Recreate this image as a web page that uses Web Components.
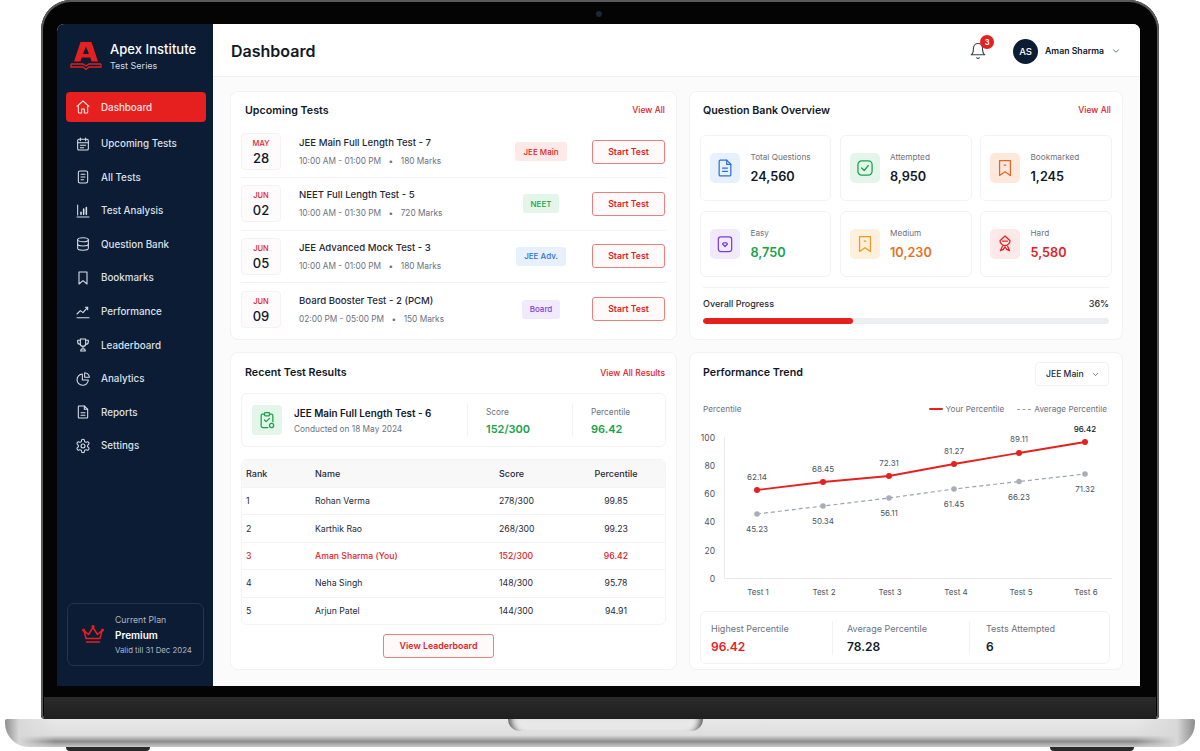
<!DOCTYPE html>
<html lang="en">
<head>
<meta charset="UTF-8">
<title>Apex Institute - Dashboard</title>
<style>
    html, body { margin: 0; height: 751px; overflow: hidden; background: #fff; font-family: Inter, "Liberation Sans", sans-serif; color: #111827; }
</style>
</head>
<body>

<apex-laptop>
    <apex-sidebar>
        <nav-item icon="home" active>Dashboard</nav-item>
        <nav-item icon="calendar">Upcoming Tests</nav-item>
        <nav-item icon="list">All Tests</nav-item>
        <nav-item icon="bars">Test Analysis</nav-item>
        <nav-item icon="database">Question Bank</nav-item>
        <nav-item icon="bookmark">Bookmarks</nav-item>
        <nav-item icon="trend">Performance</nav-item>
        <nav-item icon="trophy">Leaderboard</nav-item>
        <nav-item icon="pie">Analytics</nav-item>
        <nav-item icon="report">Reports</nav-item>
        <nav-item icon="gear">Settings</nav-item>
    </apex-sidebar>
    <top-bar></top-bar>
    <dash-grid>
        <panel-card heading="Upcoming Tests" action="View All">
            <test-row month="MAY" day="28" name="JEE Main Full Length Test - 7" time="10:00 AM - 01:00 PM" marks="180 Marks" tag="JEE Main" tone="red"></test-row>
            <test-row month="JUN" day="02" name="NEET Full Length Test - 5" time="10:00 AM - 01:30 PM" marks="720 Marks" tag="NEET" tone="green"></test-row>
            <test-row month="JUN" day="05" name="JEE Advanced Mock Test - 3" time="10:00 AM - 01:00 PM" marks="180 Marks" tag="JEE Adv." tone="blue"></test-row>
            <test-row month="JUN" day="09" name="Board Booster Test - 2 (PCM)" time="02:00 PM - 05:00 PM" marks="150 Marks" tag="Board" tone="purple"></test-row>
        </panel-card>

        <panel-card heading="Question Bank Overview" action="View All" style="--title-x:13px">
            <tile-grid>
                <stat-tile icon="doc" tone="blue" label="Total Questions" value="24,560"></stat-tile>
                <stat-tile icon="check" tone="green" label="Attempted" value="8,950"></stat-tile>
                <stat-tile icon="mark" tone="orange" label="Bookmarked" value="1,245"></stat-tile>
                <stat-tile icon="easy" tone="purple" label="Easy" value="8,750" colored></stat-tile>
                <stat-tile icon="mark" tone="amber" label="Medium" value="10,230" colored></stat-tile>
                <stat-tile icon="hard" tone="red" label="Hard" value="5,580" colored></stat-tile>
            </tile-grid>
            <overall-progress value="36"></overall-progress>
        </panel-card>

        <panel-card heading="Recent Test Results" action="View All Results" style="--head-top:5px">
            <result-summary></result-summary>
            <rank-table>
                <rank-row head rank="Rank" name="Name" score="Score" pct="Percentile"></rank-row>
                <rank-row rank="1" name="Rohan Verma" score="278/300" pct="99.85"></rank-row>
                <rank-row rank="2" name="Karthik Rao" score="268/300" pct="99.23"></rank-row>
                <rank-row me rank="3" name="Aman Sharma (You)" score="152/300" pct="96.42"></rank-row>
                <rank-row rank="4" name="Neha Singh" score="148/300" pct="95.78"></rank-row>
                <rank-row rank="5" name="Arjun Patel" score="144/300" pct="94.91"></rank-row>
            </rank-table>
            <outline-button>View Leaderboard</outline-button>
        </panel-card>

        <panel-card heading="Performance Trend" style="--title-x:13px;--head-top:5px">
            <select-box slot="action">JEE Main</select-box>
            <trend-chart></trend-chart>
            <stat-strip></stat-strip>
        </panel-card>
    </dash-grid>
</apex-laptop>

<script>
    const ICONS = {
        home: '<path d="M3 11 12 3l9 8"/><path d="M5 9.5V20a1 1 0 0 0 1 1h4v-6h4v6h4a1 1 0 0 0 1-1V9.5"/>',
        calendar: '<rect x="4" y="5" width="16" height="16" rx="2"/><path d="M8 3v4M16 3v4M4 10h16M8 14h8M8 17.5h5"/>',
        list: '<rect x="5" y="3" width="14" height="18" rx="2.5"/><path d="M9 8h6M9 12h6M9 16h4"/>',
        bars: '<path d="M4 3v15M3 21h18"/><path d="M9 17v-3M13 17V9M17 17V7" stroke-width="2.4"/>',
        database: '<ellipse cx="12" cy="5.5" rx="8" ry="3"/><path d="M4 5.5V18.5c0 1.7 3.6 3 8 3s8-1.3 8-3V5.5"/><path d="M4 12c0 1.7 3.6 3 8 3s8-1.3 8-3"/>',
        bookmark: '<path d="M6 3h12v18l-6-5-6 5z"/>',
        trend: '<path d="M3 20.5h18"/><path d="M3 15l5-5 4 3 7-8"/><path d="M15.5 5H19v3.5"/>',
        trophy: '<path d="M8 3h8v7a4 4 0 0 1-8 0z"/><path d="M8 5H4v2a4 4 0 0 0 4 4M16 5h4v2a4 4 0 0 1-4 4M12 14v4M8.5 21h7l-1-3h-5z"/>',
        pie: '<path d="M11 4.5a8.5 8.5 0 1 0 9 9h-9z"/><path d="M14.5 2.5a7 7 0 0 1 7 7h-7z"/>',
        report: '<path d="M6 3h8l5 5v12a1 1 0 0 1-1 1H6a1 1 0 0 1-1-1V4a1 1 0 0 1 1-1z"/><path d="M14 3v5h5M9 13h6M9 17h6"/>',
        gear: '<circle cx="12" cy="12" r="3"/><path d="M12.22 2h-.44a2 2 0 0 0-2 2v.18a2 2 0 0 1-1 1.73l-.43.25a2 2 0 0 1-2 0l-.15-.08a2 2 0 0 0-2.73.73l-.22.38a2 2 0 0 0 .73 2.73l.15.1a2 2 0 0 1 1 1.72v.51a2 2 0 0 1-1 1.74l-.15.09a2 2 0 0 0-.73 2.73l.22.38a2 2 0 0 0 2.73.73l.15-.08a2 2 0 0 1 2 0l.43.25a2 2 0 0 1 1 1.73V20a2 2 0 0 0 2 2h.44a2 2 0 0 0 2-2v-.18a2 2 0 0 1 1-1.73l.43-.25a2 2 0 0 1 2 0l.15.08a2 2 0 0 0 2.73-.73l.22-.39a2 2 0 0 0-.73-2.73l-.15-.08a2 2 0 0 1-1-1.74v-.5a2 2 0 0 1 1-1.74l.15-.09a2 2 0 0 0 .73-2.73l-.22-.38a2 2 0 0 0-2.73-.73l-.15.08a2 2 0 0 1-2 0l-.43-.25a2 2 0 0 1-1-1.73V4a2 2 0 0 0-2-2z"/>',
        doc: '<path d="M6.5 2.5H14l5 5V20a1.5 1.5 0 0 1-1.5 1.5h-11A1.5 1.5 0 0 1 5 20V4a1.5 1.5 0 0 1 1.5-1.5z"/><path d="M14 2.5v5h5M9 12h6M9 16h6"/>',
        check: '<rect x="3.5" y="3.5" width="17" height="17" rx="4.5"/><path d="M8 12l3 3 5-6"/>',
        mark: '<path d="M5.5 3h13v18L12 16.500 5.500 21z"/><path d="M11 8.5h2"/>',
        easy: '<path d="M7 3.5h10a3 3 0 0 1 3 3V18a3 3 0 0 1-3 3H7a3 3 0 0 1-3-3V6.5a3 3 0 0 1 3-3z"/><path d="M12 15l-3-3 1-1.500h4l1 1.500z"/>',
        hard: '<path d="M12 2.5l6 5.500c0 3-3 6-6 6s-6-3-6-6z"/><path d="M9 8.500h6M9 14.500l-2.500 5.500 3.500-1.500 2-3 2 3 3.500 1.500-2.500-5.500"/>',
        clipboard: '<path d="M9 5H7a2 2 0 0 0-2 2v12a2 2 0 0 0 2 2h6"/><path d="M15 5h2a2 2 0 0 1 2 2v7"/><rect x="9" y="3" width="6" height="4" rx="1"/><path d="M9 12l2 2 4-4"/><circle cx="17.5" cy="18.5" r="2.5"/>',
        bell: '<path d="M6 8a6 6 0 0 1 12 0c0 7 3 9 3 9H3s3-2 3-9"/><path d="M10.3 21a1.94 1.94 0 0 0 3.4 0"/>',
        chevron: '<path d="M6 9l6 6 6-6"/>'
    };
    const svgIcon = (name, size) => `<svg width="${size}" height="${size}" viewBox="0 0 24 24" fill="none" stroke="currentColor" stroke-width="2" stroke-linecap="round" stroke-linejoin="round">${ICONS[name]}</svg>`;

    const TONES = {
        red: ['#fde9e8', '#e5201f'], green: ['#e4f5ea', '#16a34a'], blue: ['#e7f0fd', '#2f6fdd'],
        purple: ['#f1e9fc', '#7c3fd1'], orange: ['#fde9dc', '#e8622a'], amber: ['#fef0dc', '#ea9a22']
    };

    // small base so each element only declares its markup
    class ShadowBase extends HTMLElement {
        connectedCallback() {
            if (this.shadowRoot) return;
            this.attachShadow({ mode: 'open' }).innerHTML = this.markup();
        }
        attr(name) { return this.getAttribute(name) || ''; }
    }

    class ApexLaptop extends ShadowBase {
        markup() {
            return `<style>
                :host { display: block; width: 1200px; height: 751px; }
                .lid { position: relative; width: 1118px; height: 719px; margin-left: 41px; background: #040404; border-radius: 30px 30px 4px 4px; box-shadow: inset 0 0 0 2px #5a5a5a; box-sizing: border-box; overflow: hidden; }
                .bezel { padding: 24px 19px 11px 16px; }
                .camera { position: absolute; left: 555px; top: 11px; width: 6px; height: 6px; border-radius: 50%; background: #1b2735; }
                .screen { width: 1083px; height: 662px; display: grid; grid-template-columns: 156px 927px; grid-template-rows: 53px 609px; border-radius: 7px 7px 0 0; overflow: hidden; background: #fbfbfc; }
                .hinge { height: 22px; margin: 0 3px; background: linear-gradient(#2a2a2a, #1f1f1f); }
                .base { position: relative; height: 28px; margin: 0 5px; border-radius: 2px 2px 24px 24px;
                    background: linear-gradient(90deg, #8f8f8f 0, #d8d8d8 14px, transparent 50px, transparent 1130px, #d8d8d8 1172px, #8c8c8c 100%), linear-gradient(#e8e8e8 0, #dedede 58%, #8b8b8b 80%, #c9c9c9 100%); }
                .notch { position: absolute; left: 503px; top: 0; width: 195px; height: 12px; border-radius: 0 0 14px 14px; background: #e8e8e8; box-shadow: inset 9px 0 6px -6px #555, inset -9px 0 6px -6px #555; }
                .feet { display: flex; justify-content: space-between; height: 4px; padding: 0 66px; }
                .feet i { width: 84px; background: #2a2a2a; border-radius: 0 0 6px 6px; }
                ::slotted(apex-sidebar) { grid-row: 1 / 3; }
            </style>
            <div class="lid">
                <div class="camera"></div>
                <div class="bezel"><div class="screen"><slot></slot></div></div>
                <div class="hinge"></div>
            </div>
            <div class="base"><div class="notch"></div></div>
            <div class="feet"><i></i><i></i></div>`;
        }
    }

    class ApexSidebar extends ShadowBase {
        markup() {
            return `<style>
                :host { display: flex; flex-direction: column; background: #0b1c34; color: #fff; min-height: 0; }
                .brand { display: flex; align-items: center; gap: 8px; padding: 16px 0 0 13px; height: 32px; }
                .brand b { display: block; font-size: 13px; font-weight: 500; line-height: 18px; letter-spacing: .05px; }
                .brand span { display: block; font-size: 9px; color: #d4dae3; line-height: 14px; margin-top: 1px; }
                nav { display: flex; flex-direction: column; gap: 3.6px; margin: 20px 7px 0 9px; }
                .plan { margin: auto 9px 20px 10px; height: 63px; box-sizing: border-box; border: 1px solid #24344c; border-radius: 7px; display: flex; align-items: center; gap: 10px; padding-left: 13px; }
                .plan .t { font-size: 8.7px; color: #aeb7c4; line-height: 14px; }
                .plan .p { font-size: 10px; font-weight: 600; line-height: 16px; }
                .plan .v { font-size: 7.8px; color: #aeb7c4; line-height: 14px; }
            </style>
            <div class="brand">
                <svg width="32" height="32" viewBox="0 0 32 32" fill="none">
                    <path fill-rule="evenodd" fill="#e5201f" d="M10.5 2h11L28 21.5h-6.5l-1.2-4h-8.6l-1.2 4H4zM16 6.5l-3 7.5h6z"/>
                    <path d="M1 24h12l3 2 3-2h12M1 24v3h12l3 2.5 3-2.5h12v-3" stroke="#e5201f" stroke-width="1.3"/>
                </svg>
                <div><b>Apex Institute</b><span>Test Series</span></div>
            </div>
            <nav><slot></slot></nav>
            <div class="plan">
                <svg width="24" height="24" viewBox="0 0 24 24" fill="none" stroke="#e5201f" stroke-width="1.5" stroke-linejoin="round" stroke-linecap="round">
                    <path d="M3 7.5l4.5 4L12 4.5l4.5 7 4.5-4-2 8H5z"/><path d="M5.5 19h13"/>
                    <circle cx="12" cy="3.5" r=".8"/><circle cx="2.5" cy="7" r=".8"/><circle cx="21.5" cy="7" r=".8"/>
                </svg>
                <div><div class="t">Current Plan</div><div class="p">Premium</div><div class="v">Valid till 31 Dec 2024</div></div>
            </div>`;
        }
    }

    class NavItem extends ShadowBase {
        markup() {
            return `<style>
                :host { display: flex; align-items: center; height: 30px; gap: 10px; padding-left: 9px; border-radius: 4px; font-size: 9.8px; font-weight: 500; color: #dbe0e8; }
                :host([active]) { background: #e5201f; color: #ffe6e4; margin-bottom: 3px; }
                svg { flex: none; }
            </style>${svgIcon(this.attr('icon'), 16).replace('stroke-width="2"', 'stroke-width="1.6"')}<slot></slot>`;
        }
    }

    class TopBar extends ShadowBase {
        markup() {
            return `<style>
                :host { display: flex; align-items: center; background: #fff; border-bottom: 1px solid #eff1f4; box-sizing: border-box; padding: 2px 19px 0 18px; }
                h1 { flex: 1; margin: 0; font-size: 16px; font-weight: 600; }
                .bell { position: relative; display: flex; color: #374151; margin-right: 26px; }
                .bell b { position: absolute; left: 11px; top: -7px; width: 14px; height: 14px; border-radius: 50%; background: #e5201f; color: #fff; font-size: 7.5px; font-weight: 700; display: flex; align-items: center; justify-content: center; }
                .av { width: 25px; height: 25px; border-radius: 50%; background: #0b1c34; color: #fff; font-size: 9.5px; font-weight: 500; display: flex; align-items: center; justify-content: center; margin-right: 7px; }
                .nm { font-size: 8.7px; font-weight: 600; margin-right: 7px; }
                .ch { display: flex; color: #4b5563; }
            </style>
            <h1>Dashboard</h1>
            <div class="bell">${svgIcon('bell', 18).replace('stroke-width="2"', 'stroke-width="1.5"')}<b>3</b></div>
            <div class="av">AS</div><div class="nm">Aman Sharma</div>
            <div class="ch">${svgIcon('chevron', 10)}</div>`;
        }
    }

    class DashGrid extends ShadowBase {
        markup() {
            return `<style>
                :host { display: grid; grid-template-columns: 447px 434px; grid-template-rows: 249px 318px; gap: 12px; padding: 14px 17px 0; background: #fbfbfc; min-height: 0; }
            </style><slot></slot>`;
        }
    }

    class PanelCard extends ShadowBase {
        markup() {
            const action = this.hasAttribute('action') ? `<a>${this.attr('action')}</a>` : '';
            return `<style>
                :host { display: block; background: #fff; border: 1px solid #f1f2f5; border-radius: 8px; box-sizing: border-box; min-width: 0; }
                header { display: flex; align-items: center; justify-content: space-between; height: 34px; box-sizing: border-box; padding: var(--head-top, 2px) 11px 0 var(--title-x, 14px); }
                h2 { margin: 0; font-size: 10.7px; font-weight: 600; }
                a { font-size: 8.5px; font-weight: 500; color: #e5201f; }
                .body { padding: 0 10px; }
            </style>
            <header><h2>${this.attr('heading')}</h2><slot name="action">${action}</slot></header>
            <div class="body"><slot></slot></div>`;
        }
    }

    class TestRow extends ShadowBase {
        markup() {
            const [bg, fg] = TONES[this.attr('tone')];
            return `<style>
                :host { display: flex; align-items: center; height: 52.3px; box-sizing: border-box; border-bottom: 1px solid #f1f2f5; padding-right: 1px; }
                :host(:last-child) { border-bottom: 0; }
                .date { width: 40px; height: 37px; box-sizing: border-box; border: 1px solid #f3f3f5; border-radius: 4px; background: #fdfbfb; text-align: center; margin-right: 18px; }
                .date small { display: block; font-size: 7.5px; font-weight: 500; color: #e5201f; line-height: 10px; margin-top: 5px; }
                .date b { display: block; font-size: 13px; font-weight: 500; line-height: 17px; margin-top: 1px; }
                .info { flex: 1; min-width: 0; }
                .name { font-size: 9.6px; font-weight: 500; line-height: 14px; color: #1f2937; }
                .sub { font-size: 8.3px; color: #6b7280; line-height: 12px; margin-top: 5px; }
                .sub i { font-style: normal; margin: 0 7.5px; }
                .cell { width: 52px; display: flex; justify-content: center; margin-right: 25px; }
                .tag { height: 19px; display: flex; align-items: center; padding: 0 8px; border-radius: 3px; font-size: 8px; font-weight: 500; background: ${bg}; color: ${fg}; white-space: nowrap; }
                button { all: unset; width: 73px; height: 24px; box-sizing: border-box; border: 1px solid #eb7f7e; border-radius: 3px; background: #fffafa; color: #e5201f; font-size: 8.7px; font-weight: 600; text-align: center; line-height: 22px; }
            </style>
            <div class="date"><small>${this.attr('month')}</small><b>${this.attr('day')}</b></div>
            <div class="info"><div class="name">${this.attr('name')}</div><div class="sub">${this.attr('time')}<i>•</i>${this.attr('marks')}</div></div>
            <div class="cell"><div class="tag">${this.attr('tag')}</div></div>
            <button>Start Test</button>`;
        }
    }

    class TileGrid extends ShadowBase {
        markup() {
            return `<style>
                :host { display: grid; grid-template-columns: 131px 132px 132px; grid-auto-rows: 66px; gap: 10px 8.5px; margin-top: 9px; }
            </style><slot></slot>`;
        }
    }

    class StatTile extends ShadowBase {
        markup() {
            const [bg, fg] = TONES[this.attr('tone')];
            const valueColor = this.attr('tone') === 'purple' ? '#16a34a' : this.attr('tone') === 'amber' ? '#ea6f22' : fg;
            return `<style>
                :host { display: flex; align-items: center; gap: 10.5px; box-sizing: border-box; border: 1px solid #f1f2f5; border-radius: 6px; padding-left: 9px; }
                .ic { width: 30px; height: 30px; border-radius: 5px; background: ${bg}; color: ${fg}; display: flex; align-items: center; justify-content: center; flex: none; }
                .l { font-size: 8.2px; color: #6b7280; line-height: 12px; }
                .v { font-size: 12.7px; font-weight: 600; line-height: 18px; margin-top: 5px; color: ${this.hasAttribute('colored') ? valueColor : '#111827'}; }
            </style>
            <div class="ic">${svgIcon(this.attr('icon'), 20).replace('stroke-width="2"', 'stroke-width="1.5"')}</div>
            <div><div class="l">${this.attr('label')}</div><div class="v">${this.attr('value')}</div></div>`;
        }
    }

    class OverallProgress extends ShadowBase {
        markup() {
            return `<style>
                :host { display: block; margin: 10px 3px 0; border-top: 1px solid #f1f2f5; padding-top: 10px; }
                .top { display: flex; justify-content: space-between; font-size: 9px; font-weight: 500; line-height: 12px; color: #1f2937; }
                .bar { height: 6px; margin-top: 8px; background: #eceef2; border-radius: 3px; overflow: hidden; }
                .bar i { display: block; height: 100%; width: 37%; background: #e5201f; border-radius: 3px; }
            </style>
            <div class="top"><span>Overall Progress</span><span>${this.attr('value')}%</span></div>
            <div class="bar"><i></i></div>`;
        }
    }

    class ResultSummary extends ShadowBase {
        markup() {
            return `<style>
                :host { display: grid; grid-template-columns: 225px 105px 1fr; align-items: center; height: 54px; margin-top: 6px; box-sizing: border-box; border: 1px solid #f1f2f5; border-radius: 6px; }
                .main { display: flex; align-items: center; gap: 12px; padding-left: 10px; }
                .ic { width: 30px; height: 30px; border-radius: 4px; background: #e4f5ea; color: #16a34a; display: flex; align-items: center; justify-content: center; }
                .n { font-size: 9.9px; font-weight: 600; line-height: 14px; }
                .d { font-size: 8.3px; color: #6b7280; line-height: 12px; margin-top: 3px; }
                .col { border-left: 1px solid #f1f2f5; padding-left: 18px; height: 32px; box-sizing: border-box; padding-top: 2px; }
                .l { font-size: 8.3px; color: #6b7280; line-height: 12px; }
                .v { font-size: 11px; font-weight: 600; color: #16a34a; line-height: 16px; margin-top: 3px; }
            </style>
            <div class="main"><div class="ic">${svgIcon('clipboard', 20).replace('stroke-width="2"', 'stroke-width="1.5"')}</div>
                <div><div class="n">JEE Main Full Length Test - 6</div><div class="d">Conducted on 18 May 2024</div></div></div>
            <div class="col"><div class="l">Score</div><div class="v">152/300</div></div>
            <div class="col"><div class="l">Percentile</div><div class="v">96.42</div></div>`;
        }
    }

    class RankTable extends ShadowBase {
        markup() {
            return `<style>
                :host { display: block; margin-top: 12px; border: 1px solid #f3f4f6; border-radius: 6px; overflow: hidden; }
            </style><slot></slot>`;
        }
    }

    class RankRow extends ShadowBase {
        markup() {
            return `<style>
                :host { display: grid; grid-template-columns: 69px 184px 67px 100px; align-items: center; height: 27.4px; box-sizing: border-box; padding-left: 4px; border-top: 1px solid #f3f4f6; font-size: 8.7px; color: #1f2937; }
                :host([head]) { height: 27px; border-top: 0; background: #f8f8f9; font-weight: 500; font-size: 9px; }
                :host([me]) { color: #e5201f; font-weight: 500; }
                .p { text-align: center; }
            </style>
            <div>${this.attr('rank')}</div><div>${this.attr('name')}</div><div>${this.attr('score')}</div><div class="p">${this.attr('pct')}</div>`;
        }
    }

    class OutlineButton extends ShadowBase {
        markup() {
            return `<style>
                :host { display: flex; align-items: center; justify-content: center; width: 111px; height: 24px; box-sizing: border-box; margin: 9px 0 0 142px; border: 1px solid #eb7f7e; border-radius: 3px; background: #fffafa; color: #e5201f; font-size: 8.8px; font-weight: 600; }
            </style><slot></slot>`;
        }
    }

    class SelectBox extends ShadowBase {
        markup() {
            return `<style>
                :host { display: flex; align-items: center; justify-content: space-between; width: 74px; height: 24px; box-sizing: border-box; margin: 3px 2px 0 0; padding: 0 8px 0 10px; border: 1px solid #eef0f3; border-radius: 4px; font-size: 8.6px; font-weight: 500; color: #1f2937; }
                div { display: flex; color: #4b5563; }
            </style><slot></slot><div>${svgIcon('chevron', 9)}</div>`;
        }
    }

    class TrendChart extends ShadowBase {
        markup() {
            const xs = [757, 823, 889, 954, 1019, 1085];
            const red = [490, 482, 476, 464, 453, 442];
            const grey = [514, 506, 498, 489, 481.5, 474];
            const redVals = ['62.14', '68.45', '72.31', '81.27', '89.11', '96.42'];
            const greyVals = ['45.23', '50.34', '56.11', '61.45', '66.23', '71.32'];
            const redLabelY = [480, 472, 466, 454, 442, 432];
            const greyLabelY = [532, 524, 516, 507, 500, 492];
            const testX = [758, 824, 890, 956, 1021, 1086];
            const ticks = [[100, 438], [80, 466], [60, 494], [40, 522], [20, 551], [0, 579]];
            const line = ys => xs.map((x, i) => `${x},${ys[i]}`).join(' ');
            return `<style>
                :host { display: block; }
                .legend { display: flex; justify-content: space-between; align-items: center; height: 12px; margin-top: 16px; padding: 0 5px 0 3px; font-size: 8.2px; color: #6b7280; }
                .keys, .keys span { display: flex; align-items: center; }
                .keys { gap: 13px; }
                .keys span { gap: 3px; }
                .solid { width: 14px; height: 2px; background: #e5201f; border-radius: 1px; }
                .dash { width: 14px; border-top: 1.5px dashed #9ca3af; }
                svg { display: block; }
                text { font-family: Inter, "Liberation Sans", sans-serif; font-size: 8px; fill: #4b5563; }
                .tick { font-size: 8.5px; }
            </style>
            <div class="legend"><div>Percentile</div><div class="keys"><span><i class="solid"></i>Your Percentile</span><span><i class="dash"></i>Average Percentile</span></div></div>
            <svg width="412" height="188" viewBox="700 415 412 188">
                <path d="M724.5 437V578.5H1112" fill="none" stroke="#e9ebef"/>
                ${ticks.map(([v, y]) => `<text class="tick" x="715" y="${y + 3}" text-anchor="end">${v}</text>`).join('')}
                ${testX.map((x, i) => `<text x="${x}" y="595" text-anchor="middle">Test ${i + 1}</text>`).join('')}
                <polyline points="${line(grey)}" fill="none" stroke="#9ca3af" stroke-width="1.2" stroke-dasharray="4 3"/>
                <polyline points="${line(red)}" fill="none" stroke="#e5201f" stroke-width="1.8"/>
                ${xs.map((x, i) => `<circle cx="${x}" cy="${grey[i]}" r="2.8" fill="#a8adb7"/><circle cx="${x}" cy="${red[i]}" r="3" fill="#e5201f"/>`).join('')}
                ${xs.map((x, i) => `<text x="${x}" y="${redLabelY[i]}" text-anchor="middle"${i === 5 ? ' style="fill:#111827;font-weight:500"' : ''}>${redVals[i]}</text>`).join('')}
                ${xs.map((x, i) => `<text x="${x}" y="${greyLabelY[i]}" text-anchor="middle">${greyVals[i]}</text>`).join('')}
            </svg>`;
        }
    }

    class StatStrip extends ShadowBase {
        markup() {
            return `<style>
                :host { display: grid; grid-template-columns: 131px 137px 1fr; align-items: center; width: 410px; height: 53px; margin-top: 8px; box-sizing: border-box; border: 1px solid #f1f2f5; border-radius: 6px; }
                .c { height: 34px; box-sizing: border-box; padding: 2px 0 0 14px; border-left: 1px solid #f1f2f5; }
                .c.first { border-left: 0; padding-left: 10px; }
                .c.last { padding-left: 16px; }
                .l { font-size: 9px; color: #6b7280; line-height: 12px; }
                .v { font-size: 12px; font-weight: 600; line-height: 16px; margin-top: 4px; }
            </style>
            <div class="c first"><div class="l">Highest Percentile</div><div class="v" style="color:#e5201f">96.42</div></div>
            <div class="c"><div class="l">Average Percentile</div><div class="v">78.28</div></div>
            <div class="c last"><div class="l">Tests Attempted</div><div class="v">6</div></div>`;
        }
    }

    customElements.define('apex-laptop', ApexLaptop);
    customElements.define('apex-sidebar', ApexSidebar);
    customElements.define('nav-item', NavItem);
    customElements.define('top-bar', TopBar);
    customElements.define('dash-grid', DashGrid);
    customElements.define('panel-card', PanelCard);
    customElements.define('test-row', TestRow);
    customElements.define('tile-grid', TileGrid);
    customElements.define('stat-tile', StatTile);
    customElements.define('overall-progress', OverallProgress);
    customElements.define('result-summary', ResultSummary);
    customElements.define('rank-table', RankTable);
    customElements.define('rank-row', RankRow);
    customElements.define('outline-button', OutlineButton);
    customElements.define('select-box', SelectBox);
    customElements.define('trend-chart', TrendChart);
    customElements.define('stat-strip', StatStrip);
</script>
</body>
</html>
